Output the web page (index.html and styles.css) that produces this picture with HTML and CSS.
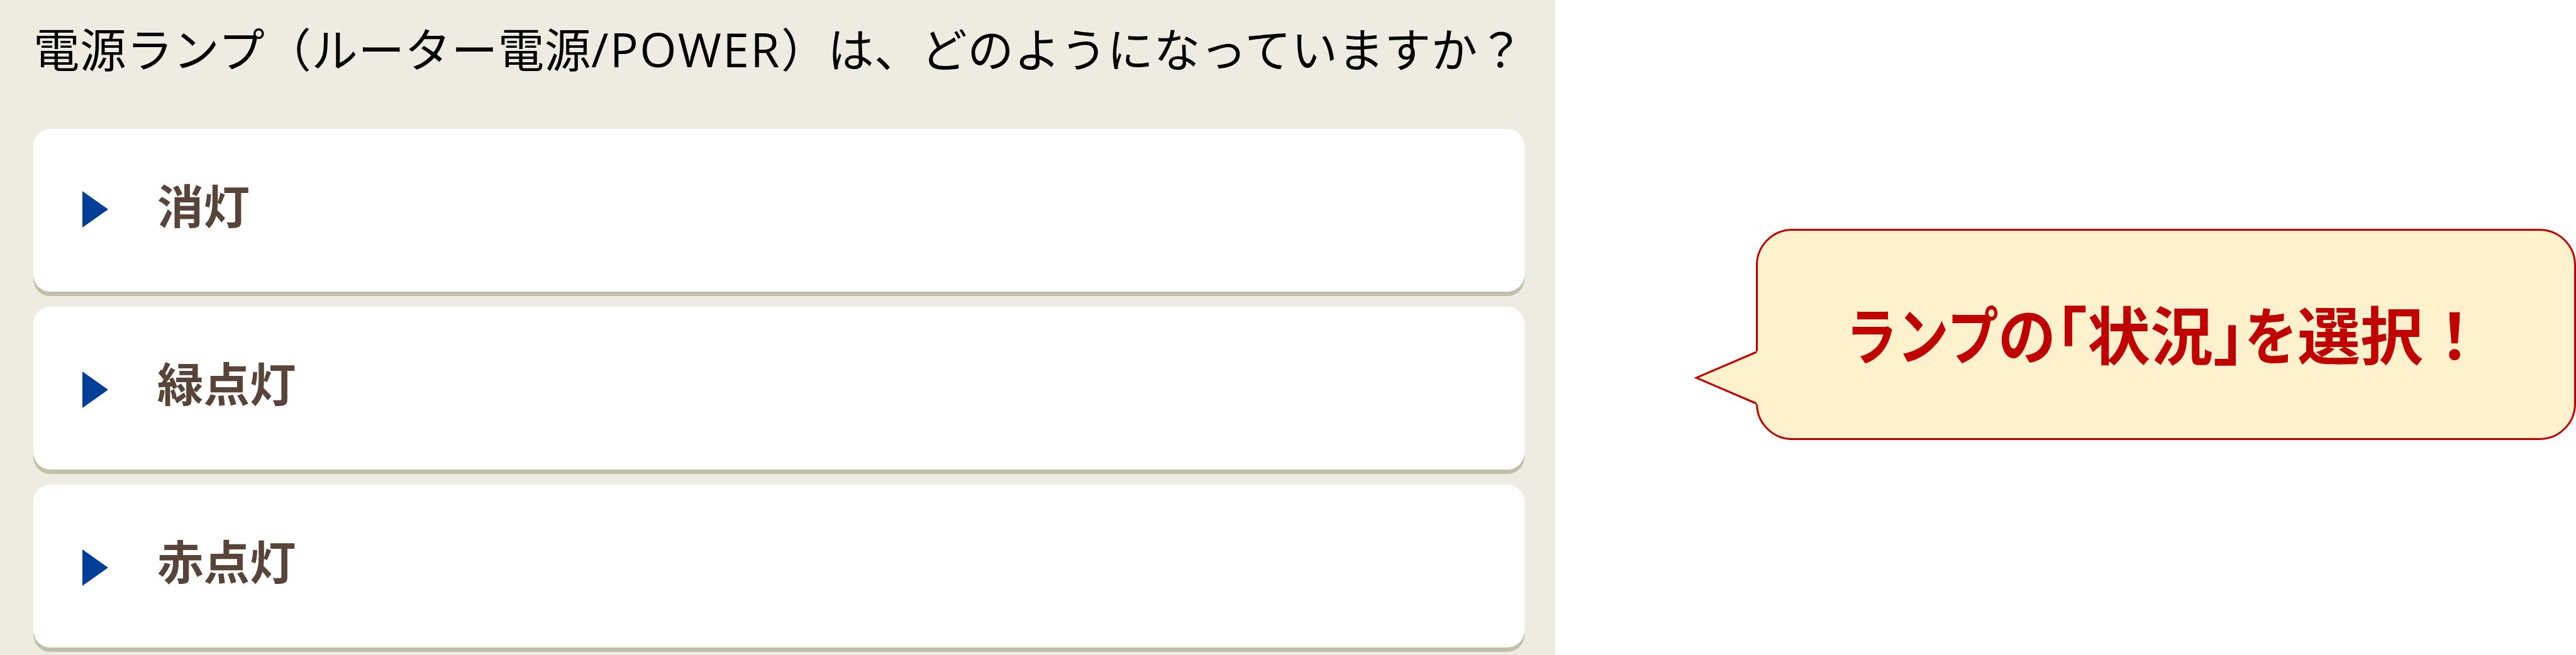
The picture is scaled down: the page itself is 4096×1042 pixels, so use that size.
FILE: index.html
```
<!DOCTYPE html>
<html lang="ja">
<head>
    <meta charset="UTF-8">
    <meta name="viewport" content="width=device-width, initial-scale=1.0">
    <title>電源ランプの状況</title>
    <link rel="stylesheet" href="styles.css">
</head>
<body>
    <div class="page">
        <div class="panel">
            <h1 class="question">電源ランプ（ルーター電源<span class="latin">/POWER</span>）は、どのようになっていますか？</h1>
            <div class="options">
                <a class="option first">
                    <svg class="arrow" viewBox="0 0 41 58"><path d="M0 0L41 29L0 58Z"/></svg>
                    <span class="label">消灯</span>
                </a>
                <a class="option">
                    <svg class="arrow" viewBox="0 0 41 58"><path d="M0 0L41 29L0 58Z"/></svg>
                    <span class="label">緑点灯</span>
                </a>
                <a class="option">
                    <svg class="arrow" viewBox="0 0 41 58"><path d="M0 0L41 29L0 58Z"/></svg>
                    <span class="label">赤点灯</span>
                </a>
            </div>
        </div>

        <div class="callout">
            <svg class="tail" viewBox="0 0 101 86"><path d="M101 0L98.5 2L3 43L98.5 84L101 86Z" class="tail-fill"/><path d="M99 2L3 43L99 84" class="tail-line"/></svg>
            <p class="message"><span class="kana">ランプ</span><span class="no">の</span><span class="bracket">「</span><span>状況</span><span class="bracket">」</span><span class="wo">を</span><span>選択！</span></p>
        </div>
    </div>
</body>
</html>
```

FILE: styles.css
```
body {
    margin: 0;
    background: #fff;
    font-family: "Noto Sans CJK JP", sans-serif;
}
.page {
    display: flex;
    align-items: flex-start;
    width: 4096px;
    height: 1042px;
    overflow: hidden;
}
.panel {
    width: 2473px;
    height: 1042px;
    padding: 0 49px 0 53px;
    box-sizing: border-box;
    background: #eeebe2;
}
.question {
    height: 205px;
    margin: 0;
    padding-top: 25px;
    box-sizing: border-box;
    font-size: 73.6px;
    font-weight: 400;
    line-height: 100px;
    letter-spacing: 0.5px;
    color: #000;
    white-space: nowrap;
}
.latin {
    font-family: "Open Sans", sans-serif;
    font-size: 75px;
    letter-spacing: 2.3px;
}
.options {
    display: flex;
    flex-direction: column;
    gap: 24px;
}
.option {
    display: flex;
    align-items: center;
    height: 259px;
    padding-left: 78px;
    box-sizing: border-box;
    background: #fff;
    border-radius: 27px;
    box-shadow: 0 7px 0 #c1bea9;
}
.arrow {
    width: 41px;
    height: 58px;
    margin-top: 4px;
    fill: #003f98;
}
.first .arrow {
    margin-top: -4px;
}
.label {
    margin: -21px 0 0 78px;
    font-size: 73.5px;
    font-weight: 700;
    line-height: 100px;
    color: #584438;
}
.callout {
    position: relative;
    display: flex;
    align-items: center;
    width: 1304px;
    height: 336px;
    margin: 364px 0 0 319px;
    padding-left: 140px;
    box-sizing: border-box;
    background: #fff1ce;
    border: 3px solid #c00000;
    border-radius: 58px;
}
.tail {
    position: absolute;
    left: -101px;
    top: 191px;
    width: 101px;
    height: 86px;
}
.tail-fill {
    fill: #fff1ce;
}
.tail-line {
    fill: none;
    stroke: #c00000;
    stroke-width: 3;
}
.message {
    display: flex;
    margin: -6px 0 0;
    font-size: 100px;
    font-weight: 700;
    line-height: 120px;
    color: #c00000;
    white-space: nowrap;
}
/* kana are set narrower than the kanji */
.kana, .no, .wo {
    transform-origin: left center;
}
.kana {
    margin-right: -55px;
    transform: scaleX(0.817);
}
.no {
    margin-right: -8px;
    transform: scaleX(0.92);
}
.wo {
    margin-right: -16px;
    transform: scaleX(0.84);
}
.bracket {
    width: 50px;
    font-feature-settings: "halt";
}
```
